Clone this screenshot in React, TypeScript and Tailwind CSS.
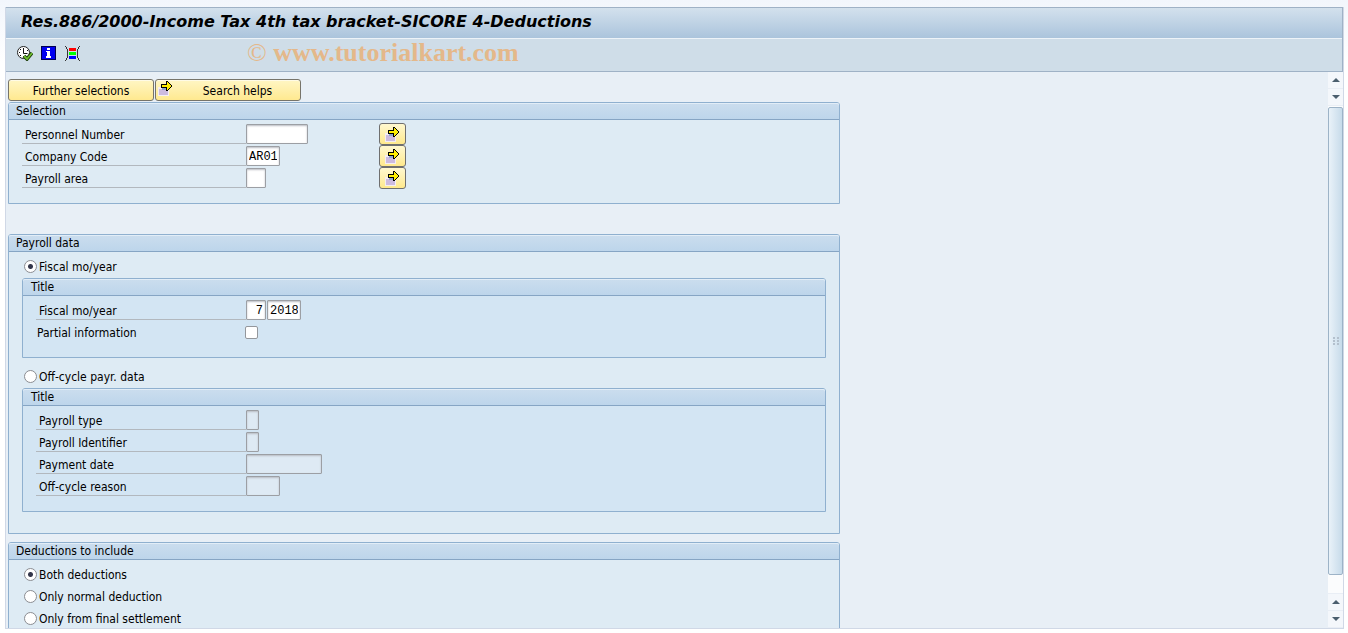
import { useState, type ReactNode } from 'react';

const monoFont = "font-['Liberation_Mono',monospace]";

function ExecuteIcon() {
  return (
    <svg width="16" height="15" viewBox="0 0 16 15">
      <circle cx="6.500" cy="6.500" r="6" fill="#fff" stroke="#222" />
      <path d="M6.500 2v5.500h4M2 6.500h1M10 4.500h1M6.500 10v1M3 3l1 1M3 10l1-1" fill="none" stroke="#111" />
      <path d="M7 10l3 3 5-6" fill="none" stroke="#1d3d0c" strokeWidth="3.600" />
      <path d="M7 10l3 3 5-6" fill="none" stroke="#6fc030" strokeWidth="1.800" />
    </svg>
  );
}

function InfoIcon() {
  return (
    <svg width="15" height="14" viewBox="0 0 15 14" shapeRendering="crispEdges">
      <path d="M0 0h15v14H0z" fill="#000050" />
      <path d="M1 1h13v12H1z" fill="#0000f0" />
      <path d="M6 2h3v2H6zM5 5h4v5h1v2H5v-2h1V6H5z" fill="#fff" />
    </svg>
  );
}

function VariantIcon() {
  return (
    <svg width="16" height="15" viewBox="-1 0 16 15" shapeRendering="crispEdges">
      <path d="M0 0h1v1h1v2h1v9H2v2H1v1H0v-1h1v-2h1V3H1V1H0zM15 0h-1v1h-1v2h-1v9h1v2h1v1h1v-1h-1v-2h-1V3h1V1h1z" fill="#333" />
      <path d="M4 2h7v3H4z" fill="#f00" />
      <path d="M4 6h7v3H4z" fill="#0f0" />
      <path d="M4 10h7v3H4z" fill="#00f" />
    </svg>
  );
}

function ArrowIcon() {
  return (
    <svg width="15" height="15" viewBox="0 0 15 15" shapeRendering="crispEdges">
      <path d="M0 6h11v9H0z" fill="#f4eef2" />
      <path d="M1 8h9v6H1z" fill="#cdbbdf" />
      <path d="M4 7h6v2H4z" fill="#8da3cf" />
      <path d="M3.500 3.500h5v-3h1l4 4v1l-4 4h-1v-3h-5z" fill="#ffee00" stroke="#000" />
    </svg>
  );
}

function ScrollArrow({ down }: { down?: boolean }) {
  return (
    <button aria-label={down ? 'Scroll down' : 'Scroll up'} className="flex h-4 w-full items-center justify-center bg-[#f4f7fb]">
      <svg width="8" height="4" viewBox="0 0 8 4">
        <path d={down ? 'M0 0h8L4 4z' : 'M4 0l4 4H0z'} fill="#4b5f6e" />
      </svg>
    </button>
  );
}

function Panel({ title, nested, className, children }: { title: string; nested?: boolean; className: string; children: ReactNode }) {
  return (
    <section className={`rounded-t-[3px] border border-[#8fb0cf] ${nested ? 'bg-[#d3e5f3]' : 'bg-[#deebf4]'} ${className}`}>
      <h2 className={`h-[17px] rounded-t-[2px] border-b border-[#86a5c4] bg-linear-to-b from-[#cbddee] to-[#bdd5eb] leading-4 shadow-[inset_0_1px_0_#e2edf7] ${nested ? 'px-2' : 'px-[7px]'}`}>
        {title}
      </h2>
      <div className="pt-[3px]">{children}</div>
    </section>
  );
}

type FieldProps = {
  id: string;
  label: string;
  width: string;
  value?: string;
  disabled?: boolean;
  nested?: boolean;
  children?: ReactNode;
};

const inputClass = `h-5 rounded-[1px] border border-[#9c9fa4] bg-white px-0.5 pt-0.5 text-xs shadow-[inset_0_1px_2px_#b9bcc2] outline-none disabled:bg-[#deeaf4] ${monoFont}`;

function Field({ id, label, width, value = '', disabled, nested, children }: FieldProps) {
  return (
    <div className="flex h-[22px] items-center pl-[13px]">
      <label htmlFor={id} className={`h-5 border-b border-[#b2b8be] pl-[3px] leading-[22px] ${nested ? 'w-[210px]' : 'w-[224px]'}`}>
        {label}
      </label>
      <input id={id} defaultValue={value} disabled={disabled} className={`${inputClass} ${width}`} />
      {children}
    </div>
  );
}

function SelectionField(props: FieldProps) {
  return (
    <div className="flex">
      <div className="w-[370px]">
        <Field {...props} />
      </div>
      <button
        aria-label={`Multiple selection ${props.label}`}
        className="flex h-[22px] w-[27px] items-center justify-center rounded-[3px] border border-[#6f6f6f] bg-linear-to-b from-[#fff8cf] to-[#ffe98c]"
      >
        <ArrowIcon />
      </button>
    </div>
  );
}

type RadioProps = { name: string; label: string; checked: boolean; onChange: () => void };

function Radio({ name, label, checked, onChange }: RadioProps) {
  return (
    <label className="flex h-[22px] items-center gap-0.5 pl-[15px] leading-[22px]">
      <input
        type="radio"
        name={name}
        checked={checked}
        onChange={onChange}
        className="size-[13px] appearance-none rounded-full border border-[#8b8d92] bg-white checked:bg-[radial-gradient(circle,#33364a_2px,#fff_3px)]"
      />
      <span className="pt-px">{label}</span>
    </label>
  );
}

const deductions = ['Both deductions', 'Only normal deduction', 'Only from final settlement'];

const yellowButton = 'flex h-[22px] w-[146px] rounded-[3px] border border-[#77746a] bg-linear-to-b from-[#fff6c4] to-[#ffe98f] leading-[22px] shadow-[inset_0_1px_0_#fffbe6]';

export default function App() {
  const [period, setPeriod] = useState('fiscal');
  const [deduction, setDeduction] = useState(deductions[0]);

  return (
    <div className="flex h-screen flex-col bg-linear-to-b from-[#f2f6fc] to-white to-10% pt-[7px] pr-1 pb-1 pl-[5px] font-['DejaVu_Sans_Condensed','Noto_Sans',sans-serif] text-xs text-black">
      <div className="flex min-h-0 flex-1 flex-col border border-t-0 border-[#d0d8e6] bg-[#e8eff6]">
        <header className="border-t border-r border-b border-[#9fb2c6]">
          <h1 className="h-[31px] border-b border-[#edf3f8] bg-linear-to-b from-[#d3e1ed] to-[#abc4dc] pl-[15px] font-['DejaVu_Sans',sans-serif] text-base leading-[27px] font-bold italic">
            Res.886/2000-Income Tax 4th tax bracket-SICORE 4-Deductions
          </h1>
          <div className="flex h-8 items-center bg-[#cfdde8] pb-1 pl-[11px]">
            <div className="flex w-[230px] items-center gap-2">
              <button aria-label="Execute"><ExecuteIcon /></button>
              <button aria-label="Information"><InfoIcon /></button>
              <button aria-label="Get variant"><VariantIcon /></button>
            </div>
            <p className="font-['Liberation_Serif',serif] text-[26px] leading-6 font-bold text-[#e4b88a]">
              <span className="font-normal">©</span> www.tutorialkart.com
            </p>
          </div>
        </header>

        <div className="flex min-h-0 flex-1">
          <main className="min-w-0 flex-1 overflow-hidden pt-[7px] pl-0.5">
            <div className="flex gap-px">
              <button className={`${yellowButton} justify-center`}>Further selections</button>
              <button className={`${yellowButton} pt-px pl-0.5`}>
                <ArrowIcon />
                <span className="flex-1 pl-0.5 leading-5">Search helps</span>
              </button>
            </div>

            <div className="max-w-[832px]">
              <Panel title="Selection" className="mt-px pb-[14px]">
                <SelectionField id="pernr" label="Personnel Number" width="w-[62px]" />
                <SelectionField id="bukrs" label="Company Code" width="w-[34px]" value="AR01" />
                <SelectionField id="abkrs" label="Payroll area" width="w-5" />
              </Panel>

              <Panel title="Payroll data" className="mt-[30px] pb-[21px]">
                <Radio name="period" label="Fiscal mo/year" checked={period === 'fiscal'} onChange={() => setPeriod('fiscal')} />
                <Panel nested title="Title" className="mx-[13px] mt-px pb-[14px]">
                  <Field nested id="month" label="Fiscal mo/year" width="w-5 text-right" value="7">
                    <input aria-label="Year" defaultValue="2018" className={`${inputClass} ml-px w-[34px]`} />
                  </Field>
                  <div className="flex h-[22px] items-center pl-[14px]">
                    <label htmlFor="partial" className="w-[208px] pt-px">Partial information</label>
                    <input id="partial" type="checkbox" className="size-[13px] appearance-none rounded-[2px] border border-[#94979c] bg-white checked:bg-[#33364a]" />
                  </div>
                </Panel>
                <div className="pt-[7px]">
                  <Radio name="period" label="Off-cycle payr. data" checked={period === 'offcycle'} onChange={() => setPeriod('offcycle')} />
                </div>
                <Panel nested title="Title" className="mx-[13px] mt-px pb-[14px]">
                  <Field nested disabled id="ptype" label="Payroll type" width="w-[13px]" />
                  <Field nested disabled id="pident" label="Payroll Identifier" width="w-[13px]" />
                  <Field nested disabled id="pdate" label="Payment date" width="w-[76px]" />
                  <Field nested disabled id="reason" label="Off-cycle reason" width="w-[34px]" />
                </Panel>
              </Panel>

              <Panel title="Deductions to include" className="mt-2 pb-[14px]">
                {deductions.map((item) => (
                  <Radio key={item} name="deduction" label={item} checked={deduction === item} onChange={() => setDeduction(item)} />
                ))}
              </Panel>
            </div>
          </main>

          {/* Scrollbar */}
          <div className="flex w-[15px] flex-col gap-px bg-[#e9eef5] pb-px">
            <ScrollArrow />
            <ScrollArrow down />
            <div className="flex flex-1 flex-col bg-[#fbfcfd] pt-px pb-[18px]">
              <div className="flex flex-1 items-center justify-center rounded-[2px] border border-[#9db3c7] bg-linear-to-r from-[#e9f2f9] to-[#c7dbea]">
                <svg width="6" height="9" viewBox="0 0 6 9" shapeRendering="crispEdges">
                  <path d="M0 0h2v2H0zM4 0h2v2H4zM0 3h2v2H0zM4 3h2v2H4zM0 6h2v2H0zM4 6h2v2H4z" fill="#b3c0cd" />
                </svg>
              </div>
            </div>
            <ScrollArrow />
            <ScrollArrow down />
          </div>
        </div>
      </div>
    </div>
  );
}
